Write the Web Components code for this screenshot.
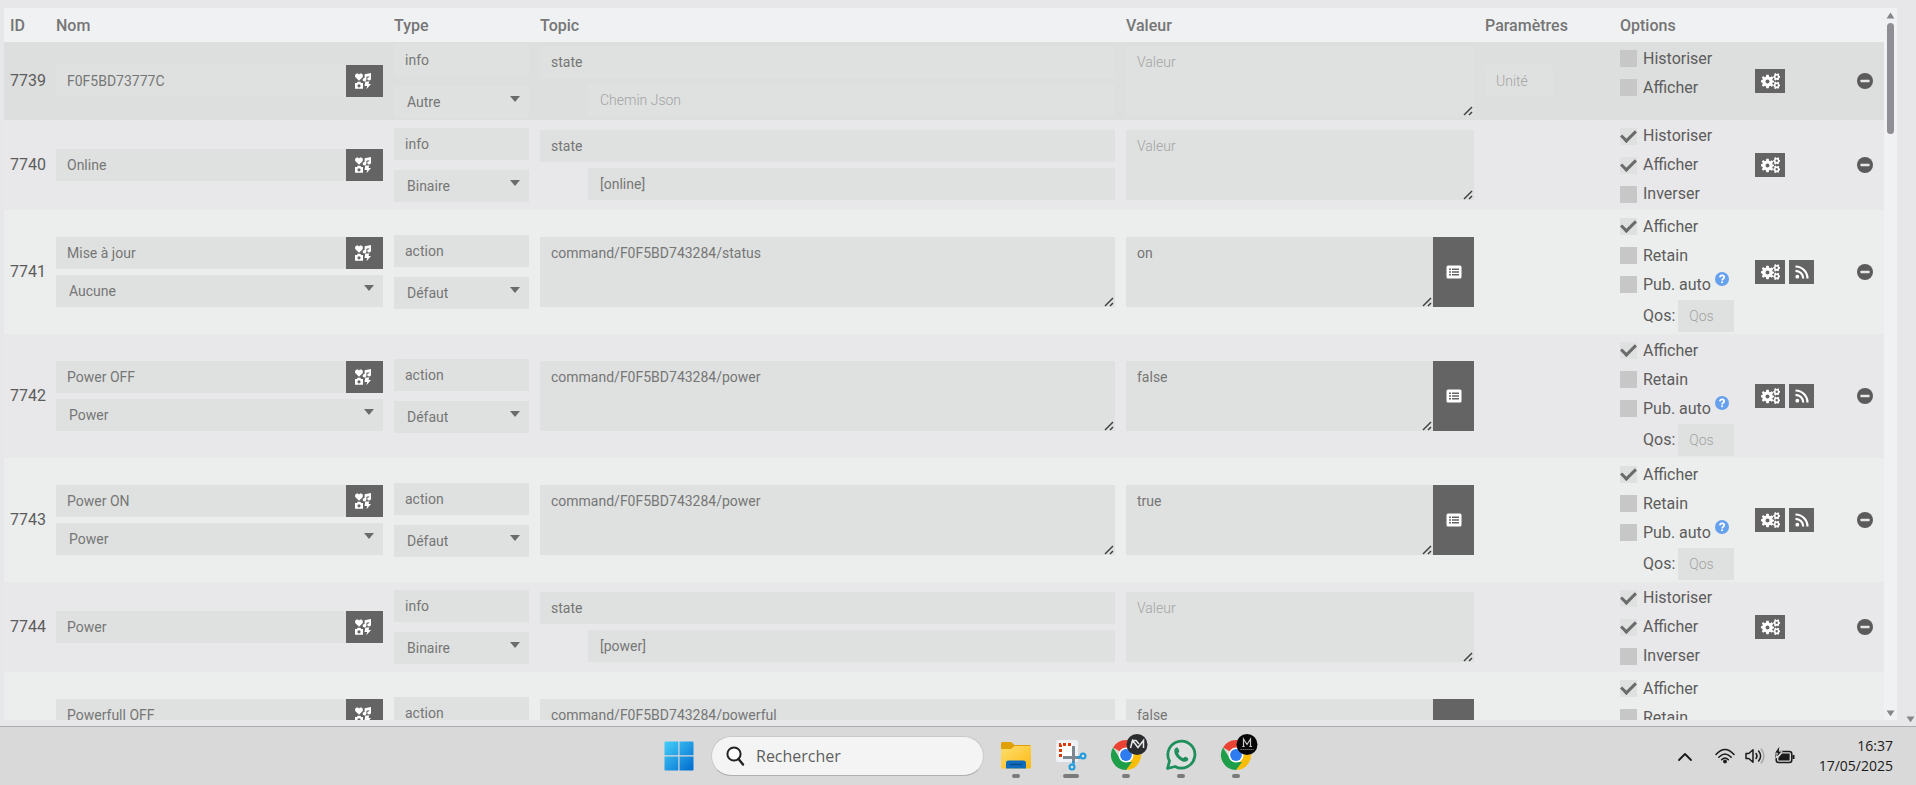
<!DOCTYPE html>
<html lang="fr">
<head>
<meta charset="utf-8">
<title>Commandes</title>
<style>
html, body { margin: 0; height: 100%; }
body { background: #e7e7e9; font-family: Roboto, "Liberation Sans", sans-serif; overflow: hidden; }
</style>
</head>
<body>
<app-page></app-page>
<script>
const ICONS = {
  media: ['0 0 16 16', '<g fill="#fff"><path d="M4 7.800 .7 4.600C-.7 2.900.4.5 2.200.5 3.100.5 3.700 1 4 1.700 4.300 1 4.900.5 5.800.5 7.600.5 8.700 2.900 7.300 4.600z"/><path d="M9.600 1.200 16 0V5.800A1.900 1.700 0 1 1 14.200 4.200V3.200L11.400 3.800V6.600A1.900 1.700 0 1 1 9.600 5z"/><path fill-rule="evenodd" d="M0 10H1.900L2.700 8.700H5.300L6.100 10H8V15.800H0zM4 11.200A1.600 1.600 0 1 0 4 14.400 1.600 1.600 0 0 0 4 11.200z"/><path d="M10.300 8.600H14.300L13.500 10.900H16L11.400 16.200 12.200 12.900H9.500z"/></g>'],
  cogs: ['0 0 19 16', '<g fill="#fff"><path fill-rule="evenodd" d="M5.300 1.800H7.700L8.100 3.700 9.200 4.200 10.800 3.200 12.300 4.800 11.200 6.400 11.600 7.400 13 7.700V9.300L11.600 9.700 11.200 10.800 12.300 12.300 10.800 13.800 9.200 12.800 8.100 13.300 7.700 15.200H5.300L4.900 13.300 3.800 12.800 2.200 13.800.8 12.300 1.800 10.700 1.400 9.700 0 9.300V7.300L1.400 7 1.800 6 .8 4.500 2.300 3.100 3.800 4.200 4.900 3.700zM6.500 6.500A2 2 0 1 0 6.500 10.500 2 2 0 0 0 6.500 6.500z"/><path fill-rule="evenodd" d="M14.500 0 15.300.9H16.100L17 .2 18.200 1 17.900 2.200 18.300 2.900 19 3.100V4.600L18.300 4.900 17.900 5.600 18.100 6.600 17 7.300 16.100 6.700H15.300L14.500 7.500 13.200 6.900 13.400 5.700 13 4.900 12.200 4.600V3.200L13 2.900 13.400 2.100 13.200 1zM15.700 2.600A1.200 1.200 0 1 0 15.700 5 1.200 1.200 0 0 0 15.700 2.600z"/><path fill-rule="evenodd" d="M14.500 8.500 15.300 9.400H16.100L17 8.700 18.200 9.500 17.900 10.700 18.300 11.400 19 11.600V13.100L18.300 13.400 17.900 14.100 18.100 15.100 17 15.800 16.100 15.200H15.300L14.500 16 13.200 15.400 13.400 14.200 13 13.400 12.200 13.100V11.700L13 11.400 13.400 10.600 13.200 9.500zM15.700 11.100A1.200 1.200 0 1 0 15.700 13.500 1.200 1.200 0 0 0 15.700 11.100z"/></g>'],
  rss: ['0 0 14 14', '<g fill="none" stroke="#fff" stroke-width="2.200"><path d="M.5 1.500A12 12 0 0 1 12.500 13.500M.5 5.800A7.700 7.700 0 0 1 8.200 13.500"/></g><circle cx="2.300" cy="11.700" r="1.900" fill="#fff"/>'],
  list: ['0 0 16 14', '<rect x=".5" y=".5" width="15" height="13" rx="1.500" fill="#fff"/><path d="M3 4.200H5M3 7H5M3 9.800H5M6 4.200H13M6 7H13M6 9.800H13" stroke="#646464" stroke-width="1.400"/>'],
  minus: ['0 0 16 16', '<circle cx="8" cy="8" r="8" fill="#5b5b5b"/><rect x="3.500" y="6.800" width="9" height="2.400" rx=".5" fill="#e7e7e9"/>'],
  help: ['0 0 14 14', '<circle cx="7" cy="7" r="7" fill="#65a1ec"/><path d="M4.900 5.400C5 4 6 3.300 7.100 3.300 8.400 3.300 9.200 4.100 9.200 5.200 9.200 6.800 7.100 6.600 7.100 8.400" fill="none" stroke="#fff" stroke-width="1.700"/><rect x="6.200" y="9.400" width="1.800" height="1.700" fill="#fff"/>'],
  up: ['0 0 10 8', '<path d="M5 0.500 9.500 7.500H.5z" fill="#85858b"/>'],
  down: ['0 0 10 8', '<path d="M5 7 9.500.5H.5z" fill="#85858b"/>'],
  search: ['0 0 18 20', '<circle cx="8" cy="8" r="6.600" fill="#fdfdfd" stroke="#222" stroke-width="2"/><path d="M12.500 13 17 18.500" stroke="#222" stroke-width="2.400" stroke-linecap="round"/>'],
  start: ['0 0 30 30', '<defs><linearGradient id="w" gradientUnits="userSpaceOnUse" x1="0" y1="0" x2="30" y2="30"><stop offset="0" stop-color="#45d0fb"/><stop offset="1" stop-color="#0069cc"/></linearGradient></defs><path fill="url(#w)" d="M1.500.5H14.300V14.300H.5V1.500Q.5.5 1.500.5zM15.500.5H28.500Q29.500.5 29.500 1.500V14.300H15.500zM.5 15.500H14.300V29.500H1.500Q.5 29.500.5 28.500zM15.500 15.500H29.500V28.500Q29.500 29.500 28.500 29.500H15.500z"/>'],
  folder: ['0 0 36 36', '<defs><linearGradient id="f" x2="1" y2="1"><stop offset="0" stop-color="#ffdf70"/><stop offset="1" stop-color="#fdb913"/></linearGradient></defs><path fill="#e0a008" d="M3 6.500Q3 5 4.500 5H12.500Q13.500 5 14.200 5.700L16.500 8H31.500Q33 8 33 9.500V12H3z"/><path fill="url(#f)" d="M3 12H13L16.500 9H33V30.500Q33 31.500 32 31.500H4Q3 31.500 3 30.500z"/><path fill="#0f6cbd" d="M8 31.500V26Q8 23.500 10.500 23.500H25.500Q28 23.500 28 26V31.500z"/><path d="M12 27.500H24" stroke="#064a8a" stroke-width="1.400"/>'],
  snip: ['0 0 36 36', '<rect x="3" y="3" width="22" height="22" rx="2.500" fill="#eef1f5"/><rect x="6" y="6" width="14" height="14" fill="#fff"/><path d="M7.500 20V7.500H20" fill="none" stroke="#d83b01" stroke-width="3" stroke-dasharray="3 2"/><path d="M20.500 9V26M10 20.500H27" stroke="#7d8790" stroke-width="3"/><g fill="none" stroke="#1c9bdf" stroke-width="2"><circle cx="19" cy="30" r="2.500"/><circle cx="30" cy="19" r="2.500"/><path d="M20.500 24V28M24 20.500 28 19.700"/></g>'],
  whatsapp: ['0 0 36 36', '<path d="M4.500 31.500 6.500 24A13.500 13.500 0 1 1 12 29.500z" fill="#dedfdf" stroke="#1f8f5c" stroke-width="2.800" stroke-linejoin="round"/><path fill="#1f8f5c" d="M13.500 10.500C14.300 10.200 15 10.700 15.300 11.500L16.300 14C16.500 14.600 15 16 15.200 16.500 16.200 18.600 17.900 20.200 20 21 20.500 21.200 21.700 19.400 22.400 19.700L25 21C25.700 21.400 25.200 23.200 24.200 24 22.300 25.500 19 24.700 16 22.200 13 19.700 11 16.300 11.300 13.500 11.400 12.200 12.300 11 13.500 10.500z"/>'],
  chevron: ['0 0 14 9', '<path d="M1 8 7 2 13 8" fill="none" stroke="#1a1a1a" stroke-width="1.800" stroke-linecap="round" stroke-linejoin="round"/>'],
  wifi: ['0 0 20 16', '<g fill="none" stroke="#1a1a1a" stroke-width="1.500" stroke-linecap="round"><path d="M1 6.500Q10-3.500 19 6.500M3.800 9.300Q10 2.500 16.200 9.300M6.600 11.800Q10 8.200 13.400 11.800"/></g><circle cx="10" cy="13.500" r="1.900" fill="#1a1a1a"/>'],
  volume: ['0 0 20 16', '<g fill="none" stroke-width="1.500" stroke-linecap="round" stroke-linejoin="round"><path stroke="#1a1a1a" d="M1 5.500H3.800L8 1.800V14.200L3.800 10.500H1zM11 5.500Q13 8 11 10.500M13.600 3Q17.600 8 13.600 13"/><path stroke="#a8a8a8" d="M16.300 1Q21.500 8 16.300 15"/></g>'],
  battery: ['0 0 20 16', '<rect x="1.200" y="3.500" width="15.600" height="11" rx="2.500" fill="none" stroke="#1a1a1a" stroke-width="1.500"/><path d="M7 5.600H14.600V12.400H3.400V9.800z" fill="#1a1a1a"/><path d="M17.500 7H19.500V11H17.500z" fill="#1a1a1a"/><path d="M4-1.500-.6 5.200H2.400L1 10.200 7.200 3.200H4.200L5-1.500z" fill="#1a1a1a" stroke="#d9d9d9" stroke-width="1"/>'],
};
const chrome = (badge) => ['0 0 40 36', '<g transform="translate(2,0)"><path fill="#ea4335" d="M18 18 5 10.500A15 15 0 0 1 31 10.500L31 11H18z"/><path fill="#fbbc04" d="M31 10.500A15 15 0 0 1 18 33L24 21.500 23 11H31z"/><path fill="#1e9e48" d="M5 10.500 12 21.500 18 25H24L18 33A15 15 0 0 1 5 10.500z"/><circle cx="18" cy="18" r="7.500" fill="#fff"/><circle cx="18" cy="18" r="5.900" fill="#2f7cf0"/></g>' + badge];
ICONS.chromeA = chrome('<circle cx="31" cy="7.500" r="10.500" fill="#2b2c30"/><path d="M24.500 11 26.500 3.500 32 10.500 37.500 3.500V11M26.500 3.500 30 3.500 33 7" fill="none" stroke="#e8e8e8" stroke-width="1.500"/>');
ICONS.chromeB = chrome('<circle cx="31" cy="7.500" r="10.500" fill="#060606"/><path d="M27.500 9.500V2L31 7.500 34.500 2V9.500M26.300 9.500H28.700M33.300 9.500H36" fill="none" stroke="#c9c9c9" stroke-width="1.200"/><path d="M24.500 12.500H37.500" stroke="#8a8a8a" stroke-width="1.200" stroke-dasharray="1.200 .8"/>');

const define = (tag, render) => customElements.define(tag, class extends HTMLElement {
  constructor() { super(); this.attachShadow({ mode: 'open' }); }
  connectedCallback() {
    this.shadowRoot.innerHTML = render(n => this.getAttribute(n) || '');
  }
});

define('ui-icon', a => {
  const [box, art] = ICONS[a('name')];
  return `<style>:host{display:inline-flex;flex:none}svg{display:block;overflow:visible}</style><svg viewBox="${box}" width="${a('w')}" height="${a('h')}" aria-hidden="true">${art}</svg>`;
});

define('icon-button', a => `<style>
:host{display:flex;flex:none}
button{border:0;margin:0;padding:0;background:#646464;width:100%;display:flex;align-items:center;justify-content:center;cursor:pointer}
:host([plain]) button{background:none}
</style><button type="button" aria-label="${a('label')}"><slot></slot></button>`);

define('text-field', a => `<style>
:host{display:block}
input{display:block;box-sizing:border-box;width:100%;height:32px;border:0;border-radius:0;margin:0;padding:0 var(--inset,11px);background:#dfe1e0;color:#767676;font:400 14px/20px Roboto,sans-serif;outline:0}
input::placeholder{color:#a3a3a3;font-weight:300;opacity:1}
</style><input type="text" aria-label="${a('label')}" value="${a('value')}" placeholder="${a('hint')}">`);

define('select-field', a => `<style>
:host{display:grid;align-items:center}
select{grid-area:1/1;appearance:none;box-sizing:border-box;width:100%;height:32px;border:0;border-radius:0;margin:0;padding:0 28px 0 13px;background:#dfe1e0;color:#767676;font:400 14px/20px Roboto,sans-serif}
i{grid-area:1/1;justify-self:end;margin:0 9px 6px 0;border:5px solid transparent;border-top:6px solid #6b6b6b;border-bottom:0;pointer-events:none}
</style><select aria-label="${a('label')}"><option>${a('value')}</option></select><i></i>`);

define('area-field', a => `<style>
:host{display:block}
textarea{display:block;box-sizing:border-box;width:100%;height:70px;border:0;border-radius:0;margin:0;padding:6px 11px;background:#dfe1e0;color:#767676;font:400 14px/20px Roboto,sans-serif;resize:vertical;outline:0;overflow:hidden}
textarea::placeholder{color:#a3a3a3;font-weight:300;opacity:1}
textarea::-webkit-resizer{background:url("data:image/svg+xml,%3Csvg xmlns='http://www.w3.org/2000/svg' width='11' height='11'%3E%3Cpath d='M1 10 9 2M6 10 9 7' stroke='%23404040' stroke-width='1.500' fill='none'/%3E%3C/svg%3E") right bottom no-repeat}
</style><textarea aria-label="${a('label')}" placeholder="${a('hint')}">${a('value')}</textarea>`);

define('check-option', a => `<style>
:host{display:flex;align-items:center;height:29px;gap:4px}
label{display:flex;align-items:center;gap:6px;font-size:16px;line-height:20px;color:#5c5c5c;white-space:nowrap}
input{appearance:none;flex:none;width:17px;height:17px;margin:0;background:#c7c7c7;display:grid;place-items:center}
input:checked{background:#dfe1e0}
input:checked::after{content:"";width:12px;height:6px;border:solid #6b6b6b;border-width:0 0 3px 3px;transform:translateY(-2px) rotate(-45deg)}
::slotted(*){padding-bottom:12px}
</style><label><input type="checkbox" ${a('on') ? 'checked' : ''}>${a('label')}</label><slot></slot>`);

define('qos-option', () => `<style>
:host{display:flex;align-items:center;height:33px;padding-left:23px;gap:3px;font-size:16px;line-height:20px;color:#5c5c5c}
text-field{width:56px}
</style><span>Qos:</span><text-field label="Qos" hint="Qos"></text-field>`);

define('scroll-bar', () => `<style>
:host{display:flex;flex-direction:column;align-items:center;width:13px;flex:none;background:#f0f1f3;padding:4px 0 3px;box-sizing:border-box}
i{width:7px;height:111px;border-radius:4px;background:#8e8e94;margin:4px 0 auto}
</style><ui-icon name="up" w="9" h="7"></ui-icon><i></i><ui-icon name="down" w="9" h="7"></ui-icon>`);

const ROWS = [
  { id: 7739, name: 'F0F5BD73777C', type: 'info', sub: 'Autre', topic: 'state', json: '', unit: true, opts: ['Historiser', 'Afficher'], tone: 'new' },
  { id: 7740, name: 'Online', type: 'info', sub: 'Binaire', topic: 'state', json: '[online]', opts: ['+Historiser', '+Afficher', 'Inverser'] },
  { id: 7741, name: 'Mise à jour', link: 'Aucune', type: 'action', sub: 'Défaut', topic: 'command/F0F5BD743284/status', value: 'on' },
  { id: 7742, name: 'Power OFF', link: 'Power', type: 'action', sub: 'Défaut', topic: 'command/F0F5BD743284/power', value: 'false' },
  { id: 7743, name: 'Power ON', link: 'Power', type: 'action', sub: 'Défaut', topic: 'command/F0F5BD743284/power', value: 'true' },
  { id: 7744, name: 'Power', type: 'info', sub: 'Binaire', topic: 'state', json: '[power]', opts: ['+Historiser', '+Afficher', 'Inverser'] },
  { id: 7745, name: 'Powerfull OFF', link: 'Aucune', type: 'action', sub: 'Défaut', topic: 'command/F0F5BD743284/powerful', value: 'false' },
];

const option = o => `<check-option ${o[0] === '+' ? 'on="1"' : ''} label="${o.replace('+', '')}">${o === 'Pub. auto' ? '<ui-icon name="help" w="14" h="14"></ui-icon>' : ''}</check-option>`;
const row = r => {
  const action = r.type === 'action';
  return `<tr class="${r.tone || r.type}">
<td>${r.id}</td>
<td><div class="stack g6"><div class="join"><text-field label="Nom" value="${r.name}"></text-field><icon-button class="pick" label="Choisir une icône"><ui-icon name="media" w="16" h="16"></ui-icon></icon-button></div>${r.link ? `<select-field label="Commande liée" value="${r.link}"></select-field>` : ''}</div></td>
<td><div class="stack g10"><text-field label="Type" value="${r.type}"></text-field><select-field label="Sous-type" value="${r.sub}"></select-field></div></td>
<td>${action ? `<area-field label="Topic" value="${r.topic}"></area-field>` : `<div class="stack g6"><text-field label="Topic" value="${r.topic}"></text-field><text-field class="json" label="Chemin Json" hint="Chemin Json" value="${r.json}"></text-field></div>`}</td>
<td>${action ? `<div class="join"><area-field label="Valeur" value="${r.value}"></area-field><icon-button class="list" label="Choisir une valeur"><ui-icon name="list" w="16" h="14"></ui-icon></icon-button></div>` : '<area-field label="Valeur" hint="Valeur"></area-field>'}</td>
<td>${r.unit ? '<text-field class="unit" label="Unité" hint="Unité"></text-field>' : ''}</td>
<td><div class="opts">${(r.opts || ['+Afficher', 'Retain', 'Pub. auto']).map(option).join('')}${action ? '<qos-option></qos-option>' : ''}</div></td>
<td><div class="acts"><icon-button class="cfg" label="Configurer"><ui-icon name="cogs" w="19" h="16"></ui-icon></icon-button>${action ? '<icon-button class="test" label="Tester"><ui-icon name="rss" w="14" h="14"></ui-icon></icon-button>' : ''}<icon-button class="del" plain label="Supprimer"><ui-icon name="minus" w="16" h="16"></ui-icon></icon-button></div></td>
</tr>`;
};

define('command-table', () => `<style>
:host{display:block}
table{border-collapse:collapse;table-layout:fixed;width:100%;min-width:1400px}
.c-id{width:46px}.c-nom{width:338px}.c-type{width:146px}.c-val{width:359px}.c-opt{width:135px}
th{height:34px;box-sizing:border-box;padding:2px 5px 0 6px;text-align:left;vertical-align:middle;font-weight:500;font-size:16px;line-height:20px;color:#767676}
thead tr{background:#f0f1f3}
td{box-sizing:border-box;padding:0 5px 0 6px;vertical-align:middle;font-size:16px;line-height:20px;color:#5c5c5c}
.new{height:78px;background:#dddfde}
.info{height:90px;background:#e8e7e9}
.action{height:124px;background:#eceeed}
.action:nth-child(even){background:#e8e7e9}
.stack{display:flex;flex-direction:column}
.g6{gap:6px}.g10{gap:10px}
.join{display:flex}
.join>:first-child{flex:1;min-width:0}
.pick{width:37px}.list{width:41px}
.pick ui-icon{margin-right:4px}
.json{margin-left:48px;--inset:12px}
.unit{width:68px}
.opts{display:flex;flex-direction:column}
.new .opts{min-height:74px}
.acts{display:flex;align-items:center;gap:4px}
.cfg{width:30px;height:24px}.test{width:25px;height:24px}.del{margin-left:auto;width:16px;height:16px;padding-right:6px}
</style>
<table><colgroup><col class="c-id"><col class="c-nom"><col class="c-type"><col><col class="c-val"><col class="c-opt"><col class="c-opt"><col class="c-opt"></colgroup>
<thead><tr><th>ID</th><th>Nom</th><th>Type</th><th>Topic</th><th>Valeur</th><th>Paramètres</th><th>Options</th><th></th></tr></thead>
<tbody>${ROWS.map(row).join('')}</tbody></table>`);

define('search-box', () => `<style>
:host{display:flex;align-items:center;gap:12px;box-sizing:border-box;width:273px;height:40px;padding:0 14px;border-radius:20px;background:#f4f4f4;border:1px solid #c9c9c9;border-bottom-color:#b0b0b0}
input{flex:1;min-width:0;border:0;padding:0;margin:0;background:none;outline:0;font:400 16px/22px "Open Sans",sans-serif}
input::placeholder{color:#5e5e5e;opacity:1}
</style><ui-icon name="search" w="18" h="20"></ui-icon><input type="search" aria-label="Rechercher" placeholder="Rechercher">`);

define('task-app', a => `<style>
:host{display:flex;flex-direction:column;align-items:center;width:55px}
button{border:0;padding:0;margin:0;background:none;display:flex}
i{width:8px;height:4px;border-radius:2px;background:#7b7b7b;margin-top:1px}
:host([active]) i{width:16px}
</style><button type="button" aria-label="${a('label')}"><slot></slot></button><i></i>`);

define('task-bar', () => `<style>
:host{display:grid;grid-template-columns:1fr auto 1fr;align-items:center;height:58px;flex:none;background:#d9d9d9;border-top:1px solid #adadad;font-family:"Open Sans",sans-serif;color:#1a1a1a}
.apps{grid-column:2;display:flex;align-items:center}
.start{width:51px}
search-box{margin:0 4px 0 7px}
.list{display:flex;padding-top:2px}
.tray{display:flex;align-items:center;justify-content:flex-end;gap:10px;padding-right:23px}
.tray ui-icon:first-child{margin-right:13px}
time{font-size:14px;line-height:20px;text-align:right;margin-left:14px}
</style>
<div class="apps"><icon-button class="start" plain label="Démarrer"><ui-icon name="start" w="30" h="30"></ui-icon></icon-button><search-box></search-box>
<div class="list">
<task-app label="Explorateur"><ui-icon name="folder" w="36" h="36"></ui-icon></task-app>
<task-app label="Capture" active><ui-icon name="snip" w="36" h="36"></ui-icon></task-app>
<task-app label="Chrome"><ui-icon name="chromeA" w="40" h="36"></ui-icon></task-app>
<task-app label="WhatsApp"><ui-icon name="whatsapp" w="36" h="36"></ui-icon></task-app>
<task-app label="Chrome 2"><ui-icon name="chromeB" w="40" h="36"></ui-icon></task-app>
</div></div>
<div class="tray"><ui-icon name="chevron" w="14" h="9"></ui-icon><ui-icon name="wifi" w="20" h="16"></ui-icon><ui-icon name="volume" w="20" h="16"></ui-icon><ui-icon name="battery" w="20" h="16"></ui-icon><time>16:37<br>17/05/2025</time></div>`);

define('app-page', () => `<style>
:host{display:flex;flex-direction:column;height:100vh}
main{flex:1;min-height:0;display:flex;padding:8px 0 0 4px}
.view{flex:1;min-width:0;overflow:hidden;margin-bottom:6px}
scroll-bar{margin-bottom:6px}
aside{width:19px;display:flex;align-items:flex-end;justify-content:flex-end;padding:0 1px 3px 0;box-sizing:border-box}
</style>
<main><div class="view"><command-table></command-table></div><scroll-bar></scroll-bar><aside><ui-icon name="down" w="9" h="7"></ui-icon></aside></main>
<task-bar></task-bar>`);
</script>
</body>
</html>
